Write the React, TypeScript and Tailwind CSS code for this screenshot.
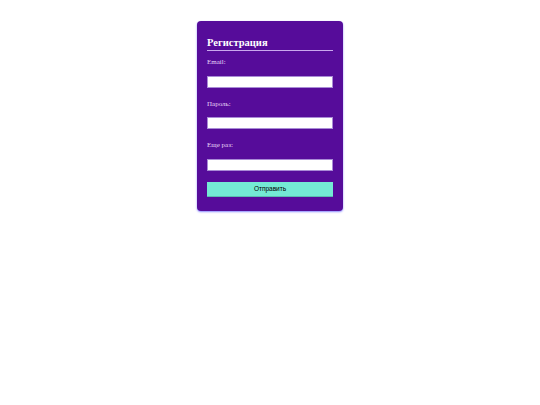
import React from "react";

export default function App() {
  return (
    <div className="w-[540px] h-[405px] bg-white flex justify-center">
      <div className="mt-[21px] w-[146px] h-[190px] bg-[#560c9a] rounded-[4px] px-[10px] pt-[16px] shadow-[0_1px_2px_rgba(60,60,255,0.6)] flex flex-col font-['Liberation_Serif']">
        <h2 className="text-[10.5px] leading-[12px] font-bold text-white border-b border-[#c9a8ee] pb-[1px] font-['Liberation_Serif']">
          Регистрация
        </h2>
        <label className="mt-[7px] text-[7px] leading-[8px] text-[#e6d6f7] font-['Liberation_Serif']">Email:</label>
        <input className="mt-[10px] h-[12px] bg-white border border-[#a98bd6] outline-none" />
        <label className="mt-[12px] text-[7px] leading-[8px] text-[#e6d6f7] font-['Liberation_Serif']">Пароль:</label>
        <input className="mt-[9px] h-[12px] bg-white border border-[#a98bd6] outline-none" />
        <label className="mt-[12px] text-[7px] leading-[8px] text-[#e6d6f7] font-['Liberation_Serif']">Еще раз:</label>
        <input className="mt-[10px] h-[12px] bg-white border border-[#a98bd6] outline-none" />
        <button className="mt-[11px] h-[15px] bg-[#74ead4] text-[6.5px] text-black font-['Liberation_Sans'] border-b border-[#5bbcb0]">
          Отправить
        </button>
      </div>
    </div>
  );
}
